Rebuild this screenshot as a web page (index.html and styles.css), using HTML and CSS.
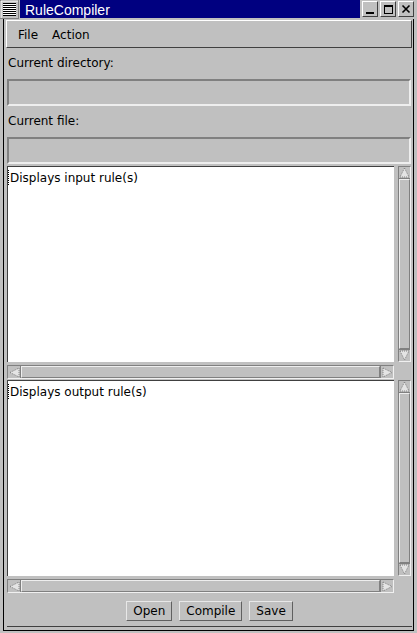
FILE: index.html
```html
<!DOCTYPE html>
<html>
<head>
<meta charset="utf-8">
<link rel="stylesheet" href="styles.css">
</head>
<body>
<div class="window">
  <div class="titlebar">
    <div class="sysmenu">
      <svg width="19" height="19" viewBox="0 0 19 19">
        <rect x="0.5" y="0.5" width="18" height="18" fill="#c0c0c0" stroke="#808080"/>
        <path d="M1 1H18M1 1V18" stroke="#fff"/>
        <rect x="3" y="3" width="13" height="13" fill="#fff"/>
        <path d="M3 3.5H16M3 5.5H16M3 7.5H16M3 9.5H16M3 11.5H16M3 13.5H16M3 15.5H16" stroke="#000"/>
      </svg>
    </div>
    <div class="title">RuleCompiler</div>
    <div class="tbtns">
      <div class="tbtn"><svg width="14" height="14" viewBox="0 0 14 14"><rect x="3" y="10" width="8" height="2" fill="#000"/></svg></div>
      <div class="tbtn"><svg width="14" height="14" viewBox="0 0 14 14"><rect x="3.5" y="3.5" width="8" height="8" fill="none" stroke="#000"/><rect x="3" y="3" width="9" height="2" fill="#000"/></svg></div>
      <div class="tbtn"><svg width="14" height="14" viewBox="0 0 14 14"><path d="M3.5 3.5L10.5 10.5M10.5 3.5L3.5 10.5" stroke="#000" stroke-width="1.6"/></svg></div>
    </div>
  </div>
  <div class="client">
    <div class="menubar">
      <span class="menu">File</span>
      <span class="menu">Action</span>
    </div>
    <div class="content">
      <div class="label">Current directory:</div>
      <div class="field"></div>
      <div class="label">Current file:</div>
      <div class="field"></div>

      <div class="textpane first">
        <div class="textarea"><span class="caret"></span>Displays input rule(s)</div>
        <div class="vscroll">
          <div class="arrow up"><svg width="11" height="11" viewBox="0 0 11 11"><polygon points="5.5,1 10,10 1,10" fill="#e4e4e4" stroke="#808080" stroke-dasharray="1 1"/></svg></div>
          <div class="thumb"></div>
          <div class="arrow down"><svg width="11" height="11" viewBox="0 0 11 11"><polygon points="1,1 10,1 5.5,10" fill="#e4e4e4" stroke="#808080" stroke-dasharray="1 1"/></svg></div>
        </div>
        <div class="hscroll">
          <div class="arrow left"><svg width="11" height="11" viewBox="0 0 11 11"><polygon points="1,5.5 10,1 10,10" fill="#e4e4e4" stroke="#808080" stroke-dasharray="1 1"/></svg></div>
          <div class="thumb"></div>
          <div class="arrow right"><svg width="11" height="11" viewBox="0 0 11 11"><polygon points="1,1 10,5.5 1,10" fill="#e4e4e4" stroke="#808080" stroke-dasharray="1 1"/></svg></div>
        </div>
      </div>

      <div class="textpane">
        <div class="textarea"><span class="caret"></span>Displays output rule(s)</div>
        <div class="vscroll">
          <div class="arrow up"><svg width="11" height="11" viewBox="0 0 11 11"><polygon points="5.5,1 10,10 1,10" fill="#e4e4e4" stroke="#808080" stroke-dasharray="1 1"/></svg></div>
          <div class="thumb"></div>
          <div class="arrow down"><svg width="11" height="11" viewBox="0 0 11 11"><polygon points="1,1 10,1 5.5,10" fill="#e4e4e4" stroke="#808080" stroke-dasharray="1 1"/></svg></div>
        </div>
        <div class="hscroll">
          <div class="arrow left"><svg width="11" height="11" viewBox="0 0 11 11"><polygon points="1,5.5 10,1 10,10" fill="#e4e4e4" stroke="#808080" stroke-dasharray="1 1"/></svg></div>
          <div class="thumb"></div>
          <div class="arrow right"><svg width="11" height="11" viewBox="0 0 11 11"><polygon points="1,1 10,5.5 1,10" fill="#e4e4e4" stroke="#808080" stroke-dasharray="1 1"/></svg></div>
        </div>
      </div>

      <div class="buttons">
        <div class="btn">Open</div>
        <div class="btn">Compile</div>
        <div class="btn">Save</div>
      </div>
    </div>
  </div>
</div>
</body>
</html>
```

FILE: styles.css
```css
* { box-sizing: border-box; }
html, body { margin: 0; padding: 0; background: #c0c0c0; }
body { font-family: "DejaVu Sans", sans-serif; font-size: 12px; color: #000; }

.window {
  width: 417px;
  height: 633px;
  background: #c0c0c0;
  padding: 0 3px 2px 0;
  display: flex;
  flex-direction: column;
}

.titlebar {
  height: 19px;
  display: flex;
  align-items: flex-start;
  flex: none;
}
.sysmenu { width: 19px; height: 19px; flex: none; }
.sysmenu svg { display: block; }
.title {
  margin-left: 1px;
  flex: 1;
  height: 18px;
  background: #000080;
  color: #fff;
  font-family: "Liberation Sans", Arial, sans-serif;
  font-size: 14px;
  line-height: 16px;
  padding: 2px 0 0 5px;
}
.tbtns { display: flex; gap: 2px; margin-left: 2px; padding-top: 1px; }
.tbtn {
  width: 16px;
  height: 16px;
  border: 1px solid;
  border-color: #fff #404040 #404040 #fff;
  background: #c0c0c0;
}
.tbtn svg { display: block; }

.client {
  flex: 1;
  margin-left: 3px;
  border-left: 1px solid #000;
  border-right: 1px solid #000;
  border-bottom: 1px solid #000;
  display: flex;
  flex-direction: column;
}

.menubar {
  margin: 1px 1px 0 2px;
  height: 28px;
  border: 1px solid;
  border-color: #fff #404040 #404040 #fff;
  display: flex;
  align-items: center;
  padding: 1px 0 0 4px;
  flex: none;
}
.menu { padding: 0 7px; line-height: 14px; }

.content {
  padding: 0 2px 0 3px;
  display: flex;
  flex-direction: column;
}
.label {
  height: 31px;
  line-height: 31px;
  padding-left: 1px;
}
.field {
  height: 27px;
  border: 2px solid;
  border-color: #808080 #eeeeee #eeeeee #808080;
  background: #c0c0c0;
}

.textpane {
  height: 214px;
  display: grid;
  grid-template-columns: 1fr 13px;
  grid-template-rows: 196px 14px;
  column-gap: 4px;
  row-gap: 3px;
}
.textpane.first { margin-top: 2px; }

.textarea {
  background: #fff;
  border-top: 1px solid #404040;
  border-left: 1px solid #404040;
  padding: 3px 0 0 0;
  line-height: 14px;
  white-space: nowrap;
  overflow: hidden;
}
.caret {
  display: inline-block;
  width: 0;
  height: 15px;
  border-left: 1px dotted #000;
  margin-right: 1px;
  vertical-align: -3px;
}

.vscroll, .hscroll {
  display: flex;
  border: 1px solid;
  border-color: #808080 #f0f0f0 #f0f0f0 #808080;
  background: #c0c0c0;
}
.vscroll { flex-direction: column; }
.hscroll { flex-direction: row; }
.arrow {
  display: flex;
  align-items: center;
  justify-content: center;
  flex: none;
}
.arrow svg { display: block; }
.vscroll .arrow { height: 12px; }
.vscroll .up { border-bottom: 1px solid #808080; }
.vscroll .down { border-top: 1px solid #808080; }
.hscroll .arrow { width: 13px; }
.hscroll .left { border-right: 1px solid #808080; }
.hscroll .right { border-left: 1px solid #808080; }
.thumb {
  flex: 1;
  border: 1px solid;
  border-color: #eeeeee #808080 #808080 #eeeeee;
}

.buttons {
  height: 33px;
  border-bottom: 1px solid #404040;
  display: flex;
  justify-content: center;
  gap: 7px;
  padding-top: 7px;
  margin-right: -1px;
}
.btn {
  height: 20px;
  line-height: 18px;
  padding: 0 6px;
  border: 1px solid;
  border-color: #e8e8e8 #606060 #606060 #e8e8e8;
  background: #c0c0c0;
}
```
